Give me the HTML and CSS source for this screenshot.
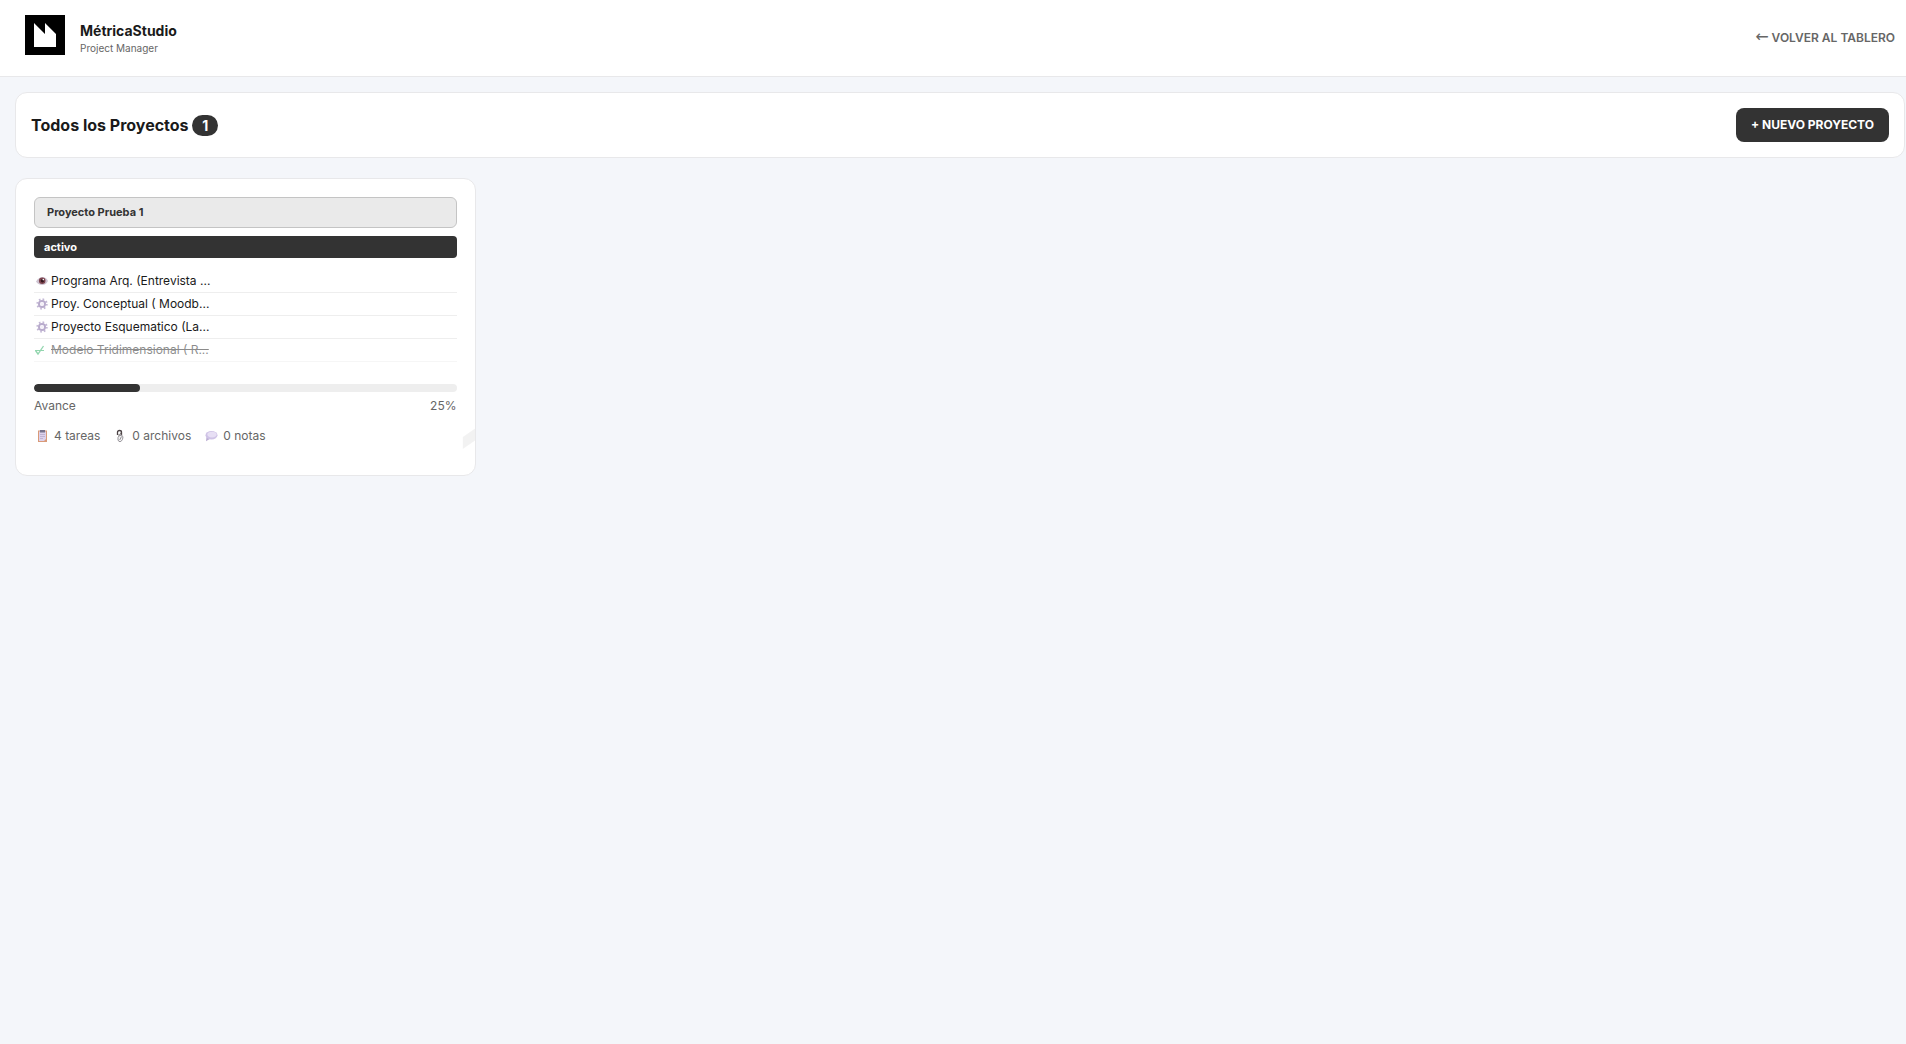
FILE: index.html
```html
<!DOCTYPE html>
<html lang="es">
<head>
<meta charset="utf-8">
<meta name="viewport" content="width=device-width, initial-scale=1">
<title>MétricaStudio</title>
<link rel="stylesheet" href="styles.css">
</head>
<body>
<svg width="0" height="0" class="sprite" aria-hidden="true">
  <symbol id="gear" viewBox="0 0 12 12">
    <circle cx="6" cy="6" r="4.7" fill="none" stroke="#c3b7d5" stroke-width="2" stroke-dasharray="1.6 2.09"/>
    <circle cx="6" cy="6" r="3" fill="none" stroke="#b8abcc" stroke-width="2"/>
    <circle cx="6" cy="6" r="1.9" fill="#f4f0f8"/>
  </symbol>
</svg>
<header class="topbar">
  <div class="brand">
    <svg class="brand-logo" viewBox="0 0 40 40" aria-hidden="true">
      <rect width="40" height="40"/>
      <path d="M9 8L20 19V8L31 19V32H9Z" fill="#fff"/>
    </svg>
    <div class="brand-text">
      <div class="brand-name">MétricaStudio</div>
      <div class="brand-sub">Project Manager</div>
    </div>
  </div>
  <a class="back" href="#"><span class="arrow">←</span> VOLVER AL TABLERO</a>
</header>
<main class="page">
  <section class="toolbar">
    <h1 class="title">Todos los Proyectos <span class="count">1</span></h1>
    <button class="new" type="button">+ NUEVO PROYECTO</button>
  </section>
  <div class="grid">
    <article class="card">
      <h2 class="name">Proyecto Prueba 1</h2>
      <div class="status">activo</div>
      <ul class="tasks">
        <li class="task">
          <svg class="icon" viewBox="0 0 12 12" aria-hidden="true"><path d="M0 6.5Q3 1.8 7 2Q10.5 2.5 12 6Q10 10.2 6 10Q2 9.7 0 6.5Z" fill="#cfc4d2"/><circle cx="6.2" cy="5.8" r="3.3" fill="#7d4650"/><circle cx="6.4" cy="5.8" r="1.7" fill="#35161f"/><circle cx="7.3" cy="4.6" r=".8" fill="#fff"/></svg>
          <span>Programa Arq. (Entrevista ...</span>
        </li>
        <li class="task">
          <svg class="icon" aria-hidden="true"><use href="#gear"/></svg>
          <span>Proy. Conceptual ( Moodb...</span>
        </li>
        <li class="task">
          <svg class="icon" aria-hidden="true"><use href="#gear"/></svg>
          <span>Proyecto Esquematico (La...</span>
        </li>
        <li class="task done">
          <svg class="icon" viewBox="0 0 12 12" aria-hidden="true"><path d="M.5 6.5L3 10L8.5 2" fill="none" stroke="#27ae60" stroke-width="1.3"/><path d="M0 6.5H9" stroke="#27ae60" stroke-width="1"/></svg>
          <span class="struck">Modelo Tridimensional ( R...</span>
        </li>
      </ul>
      <div class="progress"><div class="fill" style="width:25%"></div></div>
      <div class="progress-label"><span>Avance</span><span>25%</span></div>
      <div class="stats">
        <span class="stat">
          <svg class="stat-icon" viewBox="0 0 16 14" aria-hidden="true"><rect x="4" y="1.5" width="9" height="11.5" fill="#d99a78"/><path d="M5 2.5H12V10L10 12H5Z" fill="#ddd2ec"/><path d="M6 1H11V3.5H6Z" fill="#77728c"/><path d="M6 5.5H11M6 7.5H11M6 9.5H9" stroke="#b9a9cd" stroke-width=".8"/></svg>
          4 tareas</span>
        <span class="stat">
          <svg class="stat-icon" viewBox="0 0 16 14" aria-hidden="true"><path d="M5.5 6V3.2Q5.5 1.5 7.5 1.5T9.5 3.2V6.5L8 11" fill="none" stroke="#4b4244" stroke-width="1.3"/><path d="M7 5V8M8.8 3.5L7.5 7" stroke="#7d7878" stroke-width="1"/><path d="M6 8.5Q7 6 9.5 6.2Q12 7 10.5 10.5Q9 13.5 7 12.5Q5.5 11.5 6 8.5Z" fill="#f3f3f3" stroke="#969399" stroke-width="1"/><path d="M7.7 11L9.5 7.5" stroke="#858289" stroke-width=".9"/></svg>
          0 archivos</span>
        <span class="stat">
          <svg class="stat-icon" viewBox="0 0 16 14" aria-hidden="true"><path d="M3.5 8L3 12.3L7.5 9.5Z" fill="#bcaed4"/><ellipse cx="8.5" cy="6.3" rx="6" ry="4.2" fill="#cfc3e6"/><ellipse cx="9" cy="5.6" rx="4.6" ry="2.8" fill="#e7dff4"/></svg>
          0 notas</span>
      </div>
      <span class="watermark" aria-hidden="true">1</span>
    </article>
  </div>
</main>
</body>
</html>
```
FILE: styles.css
```css
* { box-sizing: border-box; }
body {
  margin: 0;
  min-height: 100vh;
  background: #f4f6fa;
  color: #1a1a1a;
  font: 12px/16px Inter, "Liberation Sans", sans-serif;
}
h1, h2, ul { margin: 0; padding: 0; }
.sprite { position: absolute; }

.topbar {
  display: flex;
  align-items: center;
  justify-content: space-between;
  padding: 15px 11px 15px 25px;
  background: #fff;
  border-bottom: 1px solid #e8e8ea;
}
.brand { display: flex; align-items: flex-start; gap: 15px; min-height: 46px; }
.brand-logo { width: 40px; height: 40px; }
.brand-text { padding-top: 6px; }
.brand-name { font-size: 14px; line-height: 20px; font-weight: 700; }
.brand-sub { font-size: 10px; line-height: 14px; color: #666; }
.back { color: #666; font-weight: 600; text-decoration: none; }
.arrow { font: 400 16px/12px "DejaVu Sans", sans-serif; }

.page { padding: 15px 1px 15px 15px; }
.toolbar {
  display: flex;
  align-items: center;
  justify-content: space-between;
  padding: 15px;
  margin-bottom: 20px;
  background: #fff;
  border: 1px solid #e8e8ea;
  border-radius: 12px;
}
.title { font-size: 16px; line-height: 21px; font-weight: 700; }
.count {
  display: inline-block;
  padding: 0 10px;
  border-radius: 12px;
  background: #333;
  color: #fff;
  font-size: 14px;
}
.new {
  height: 34px;
  padding: 0 15px;
  border: 0;
  border-radius: 8px;
  background: #333;
  color: #fff;
  font: 700 12px/16px Inter, "Liberation Sans", sans-serif;
}

.grid {
  display: grid;
  grid-template-columns: repeat(auto-fill, minmax(400px, 1fr));
  gap: 16px;
}
.card {
  position: relative;
  overflow: hidden;
  padding: 18px 18px 31px;
  background: #fff;
  border: 1px solid #e8e8ea;
  border-radius: 12px;
}
.name {
  padding: 7px 12px;
  margin-bottom: 8px;
  background: #eaeaea;
  border: 1px solid #c4c4c4;
  border-radius: 6px;
  color: #333;
  font-size: 11px;
  line-height: 15px;
  font-weight: 700;
}
.status {
  padding: 3px 10px;
  margin-bottom: 12px;
  background: #333;
  border-radius: 4px;
  color: #fff;
  font-size: 11px;
  font-weight: 700;
}
.tasks { list-style: none; margin-bottom: 22px; }
.task {
  display: flex;
  align-items: center;
  gap: 3px;
  height: 23px;
  padding-left: 2px;
  border-bottom: 1px solid #eee;
}
.icon { width: 12px; height: 12px; }
.done { opacity: .5; padding-left: 1px; gap: 4px; }
.struck { text-decoration: line-through; }

.progress { height: 8px; border-radius: 4px; background: #eee; overflow: hidden; }
.fill { height: 100%; border-radius: 4px; background: #333; }
.progress-label {
  display: flex;
  justify-content: space-between;
  margin: 6px 0 14px;
  color: #666;
}
.stats { display: flex; gap: 12px; color: #666; }
.stat { display: flex; align-items: center; gap: 4px; }
.stat-icon { width: 16px; height: 14px; }
.watermark {
  position: absolute;
  right: -20px;
  bottom: -30px;
  color: rgba(0, 0, 0, .05);
  font-size: 80px;
  line-height: 96px;
  font-weight: 800;
}
```
